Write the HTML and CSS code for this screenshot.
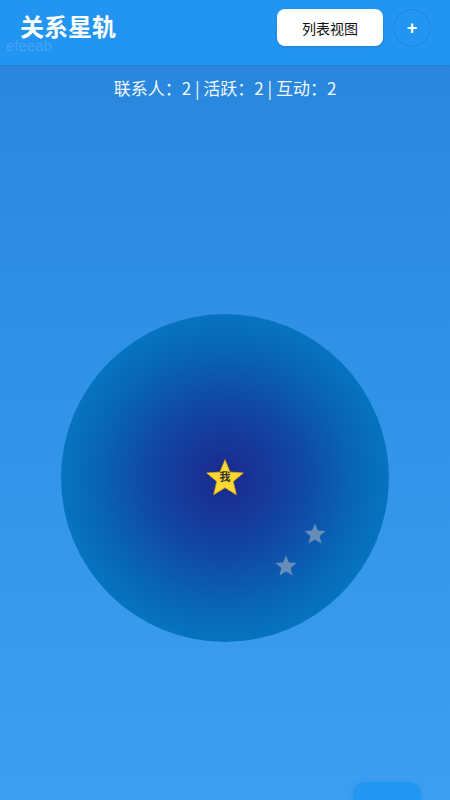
FILE: index.html
```html
<!DOCTYPE html>
<html lang="zh-CN">
<head>
  <meta charset="UTF-8">
  <title>关系星轨</title>
  <link rel="stylesheet" href="styles.css">
</head>
<body>
  <header class="topbar">
    <h1 class="title">关系星轨</h1>
    <span class="watermark">efeeab</span>
    <div class="actions">
      <button class="list-btn">列表视图</button>
      <button class="add-btn">+</button>
    </div>
  </header>

  <div class="stats">联系人：2 | 活跃：2 | 互动：2</div>

  <div class="orbit-wrap">
    <div class="orbit">
      <div class="star me" style="left: 50%; top: 50%;">
        <svg viewBox="0 0 24 24"><polygon points="12,1.5 14.9,8.6 22.5,9.1 16.7,14 18.5,21.6 12,17.5 5.5,21.6 7.3,14 1.5,9.1 9.1,8.6" /></svg>
        <span>我</span>
      </div>
      <div class="star contact" style="left: 77.4%; top: 67.1%;">
        <svg viewBox="0 0 24 24"><polygon points="12,1.5 14.9,8.6 22.5,9.1 16.7,14 18.5,21.6 12,17.5 5.5,21.6 7.3,14 1.5,9.1 9.1,8.6" /></svg>
      </div>
      <div class="star contact" style="left: 68.6%; top: 76.8%;">
        <svg viewBox="0 0 24 24"><polygon points="12,1.5 14.9,8.6 22.5,9.1 16.7,14 18.5,21.6 12,17.5 5.5,21.6 7.3,14 1.5,9.1 9.1,8.6" /></svg>
      </div>
    </div>
  </div>

  <button class="fab"></button>
</body>
</html>
```

FILE: styles.css
```css
html, body {
  height: 100%;
}

body {
  margin: 0;
  font-family: 'Noto Sans CJK SC', 'Noto Sans', sans-serif;
  background: linear-gradient(180deg, #2884dc 0%, #3193e8 50%, #3d9ff0 100%);
  color: #fff;
  overflow: hidden;
  position: relative;
}

.topbar {
  position: relative;
  height: 65px;
  background: #2195f1;
  display: flex;
  align-items: center;
  justify-content: space-between;
  padding: 0 19px 10px 20px;
  box-sizing: border-box;
  box-shadow: 0 1px 3px rgba(0, 0, 0, 0.08);
}

.title {
  margin: 0;
  font-size: 24px;
  font-weight: bold;
  line-height: 18px;
  margin-top: -3px;
}

.watermark {
  position: absolute;
  left: 6px;
  top: 39px;
  font-family: 'Liberation Sans', sans-serif;
  font-size: 15px;
  line-height: 14px;
  color: rgba(255, 255, 255, 0.16);
}

.actions {
  display: flex;
  align-items: center;
  gap: 10px;
}

.list-btn {
  width: 106px;
  height: 37px;
  border: none;
  border-radius: 8px;
  background: #fff;
  color: #111;
  font-family: inherit;
  font-size: 14px;
  box-shadow: 0 1px 3px rgba(0, 0, 0, 0.12);
}

.add-btn {
  width: 38px;
  height: 38px;
  border-radius: 50%;
  border: 1px solid rgba(0, 60, 140, 0.12);
  background: #2195f1;
  color: #fff;
  font-size: 18px;
  font-weight: bold;
  font-family: 'Liberation Sans', sans-serif;
  padding: 0;
  line-height: 1;
}

.stats {
  text-align: center;
  font-size: 17px;
  line-height: 24px;
  padding-top: 76px;
  margin-top: -65px;
  color: #f2f7fd;
}

.orbit-wrap {
  display: flex;
  justify-content: center;
  margin-top: 214px;
}

.orbit {
  position: relative;
  width: 328px;
  height: 328px;
  border-radius: 50%;
  background: radial-gradient(circle closest-side, #1b2a8c 0%, #16389a 25%, #104ba6 50%, #0962b5 75%, #0674c0 100%);
}

.star {
  position: absolute;
  transform: translate(-50%, -50%);
  display: flex;
  align-items: center;
  justify-content: center;
}

.star svg {
  width: 100%;
  height: 100%;
  display: block;
}

.me {
  width: 42px;
  height: 42px;
}

.me polygon {
  fill: #fdd835;
  stroke: #e0a800;
  stroke-width: 0.4;
}

.me span {
  position: absolute;
  top: 14px;
  font-size: 11px;
  font-weight: bold;
  color: #333;
  line-height: 1;
}

.contact {
  width: 24px;
  height: 24px;
}

.contact polygon {
  fill: #8ea3bd;
  opacity: 0.7;
}

.fab {
  position: absolute;
  left: 353px;
  top: 782px;
  width: 68px;
  height: 50px;
  border: none;
  border-radius: 12px;
  background: #2197f3;
  box-shadow: 0 0 6px rgba(0, 60, 140, 0.08);
}
```
